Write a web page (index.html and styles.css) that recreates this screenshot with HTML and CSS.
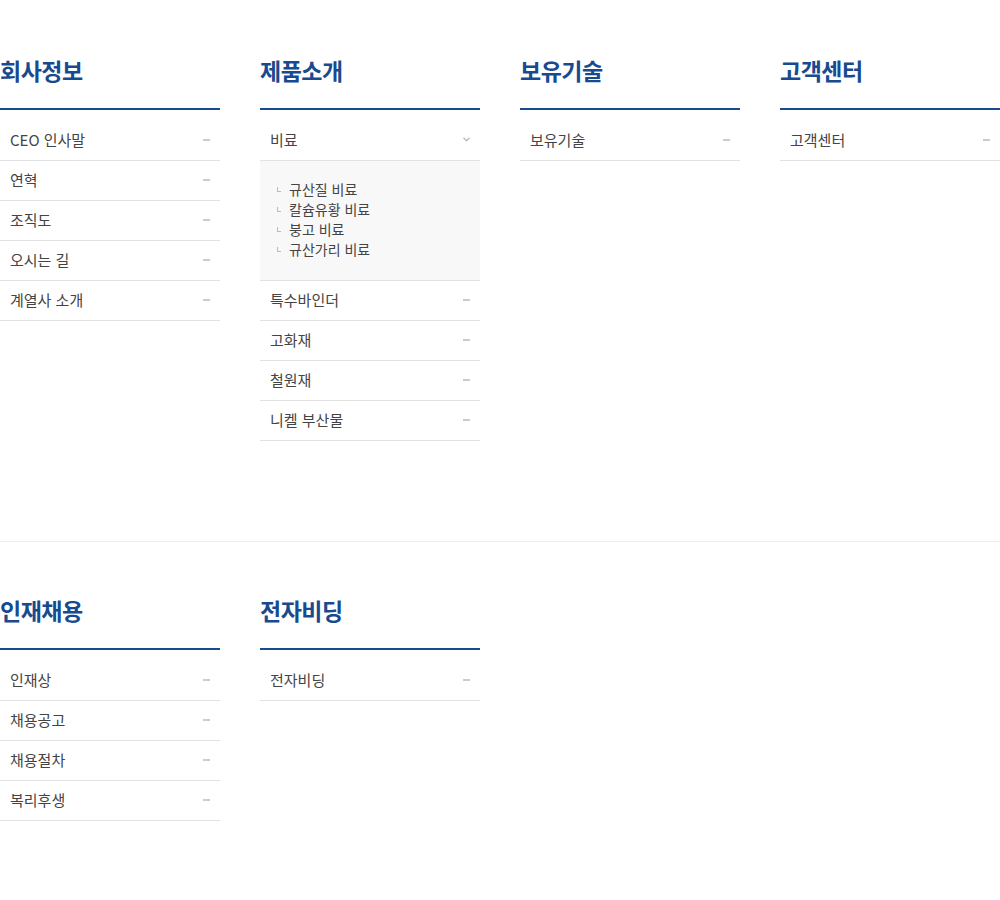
FILE: index.html
```html
<!DOCTYPE html>
<html lang="ko">
<head>
<meta charset="utf-8">
<title>Sitemap</title>
<link rel="stylesheet" href="styles.css">
</head>
<body>
<div class="sitemap">
  <section class="row">
    <div class="col">
      <h2 class="col-title">회사정보</h2>
      <ul class="menu">
        <li class="menu-item"><span>CEO 인사말</span><i class="dash"></i></li>
        <li class="menu-item"><span>연혁</span><i class="dash"></i></li>
        <li class="menu-item"><span>조직도</span><i class="dash"></i></li>
        <li class="menu-item"><span>오시는 길</span><i class="dash"></i></li>
        <li class="menu-item"><span>계열사 소개</span><i class="dash"></i></li>
      </ul>
    </div>
    <div class="col">
      <h2 class="col-title">제품소개</h2>
      <ul class="menu">
        <li class="menu-item open"><span>비료</span>
          <svg class="chev" width="7" height="5" viewBox="0 0 7 5"><path d="M0.5 0.8 L3.5 3.8 L6.5 0.8" fill="none" stroke="#bbb" stroke-width="1.4"/></svg>
        </li>
        <li class="submenu">
          <ul>
            <li><span class="corner"></span>규산질 비료</li>
            <li><span class="corner"></span>칼슘유황 비료</li>
            <li><span class="corner"></span>붕고 비료</li>
            <li><span class="corner"></span>규산가리 비료</li>
          </ul>
        </li>
        <li class="menu-item"><span>특수바인더</span><i class="dash"></i></li>
        <li class="menu-item"><span>고화재</span><i class="dash"></i></li>
        <li class="menu-item"><span>철원재</span><i class="dash"></i></li>
        <li class="menu-item"><span>니켈 부산물</span><i class="dash"></i></li>
      </ul>
    </div>
    <div class="col">
      <h2 class="col-title">보유기술</h2>
      <ul class="menu">
        <li class="menu-item"><span>보유기술</span><i class="dash"></i></li>
      </ul>
    </div>
    <div class="col">
      <h2 class="col-title">고객센터</h2>
      <ul class="menu">
        <li class="menu-item"><span>고객센터</span><i class="dash"></i></li>
      </ul>
    </div>
  </section>
  <section class="row">
    <div class="col">
      <h2 class="col-title">인재채용</h2>
      <ul class="menu">
        <li class="menu-item"><span>인재상</span><i class="dash"></i></li>
        <li class="menu-item"><span>채용공고</span><i class="dash"></i></li>
        <li class="menu-item"><span>채용절차</span><i class="dash"></i></li>
        <li class="menu-item"><span>복리후생</span><i class="dash"></i></li>
      </ul>
    </div>
    <div class="col">
      <h2 class="col-title">전자비딩</h2>
      <ul class="menu">
        <li class="menu-item"><span>전자비딩</span><i class="dash"></i></li>
      </ul>
    </div>
  </section>
</div>
</body>
</html>
```

FILE: styles.css
```css
* { box-sizing: border-box; }
html, body { margin: 0; padding: 0; background: #fff; }
body {
  font-family: "Noto Sans CJK KR", "Noto Sans", sans-serif;
  color: #444;
}
ul { list-style: none; margin: 0; padding: 0; }

.sitemap { width: 1000px; }

.row {
  display: grid;
  grid-template-columns: repeat(4, 220px);
  column-gap: 40px;
  align-items: start;
  padding: 47px 0 100px;
  height: 542px;
  border-bottom: 1px solid #eeeeee;
}
.row + .row {
  border-bottom: 0;
  height: auto;
  padding-top: 45px;
}

.col-title {
  margin: 0;
  font-size: 23px;
  font-weight: 700;
  line-height: 46px;
  letter-spacing: -0.5px;
  color: #174a8f;
  padding-bottom: 15px;
  border-bottom: 2px solid #174a8f;
}

.menu { padding-top: 11px; }

.menu-item {
  display: flex;
  align-items: center;
  justify-content: space-between;
  height: 40px;
  padding: 0 10px 2px;
  border-bottom: 1px solid #e2e2e2;
  font-size: 15px;
  color: #444;
}
.dash {
  display: block;
  width: 7px;
  height: 2px;
  background: #cccccc;
}
.chev { margin-right: 0; }

.submenu {
  background: #f8f8f8;
  border-bottom: 1px solid #e2e2e2;
  padding: 18px 17px 21px;
}
.submenu li {
  font-size: 14px;
  line-height: 20px;
  color: #444;
  display: flex;
  align-items: center;
}
.corner {
  display: inline-block;
  width: 4px;
  height: 5px;
  border-left: 1px solid #bbb;
  border-bottom: 1px solid #bbb;
  margin-right: 8px;
  margin-top: 1px;
}
```
